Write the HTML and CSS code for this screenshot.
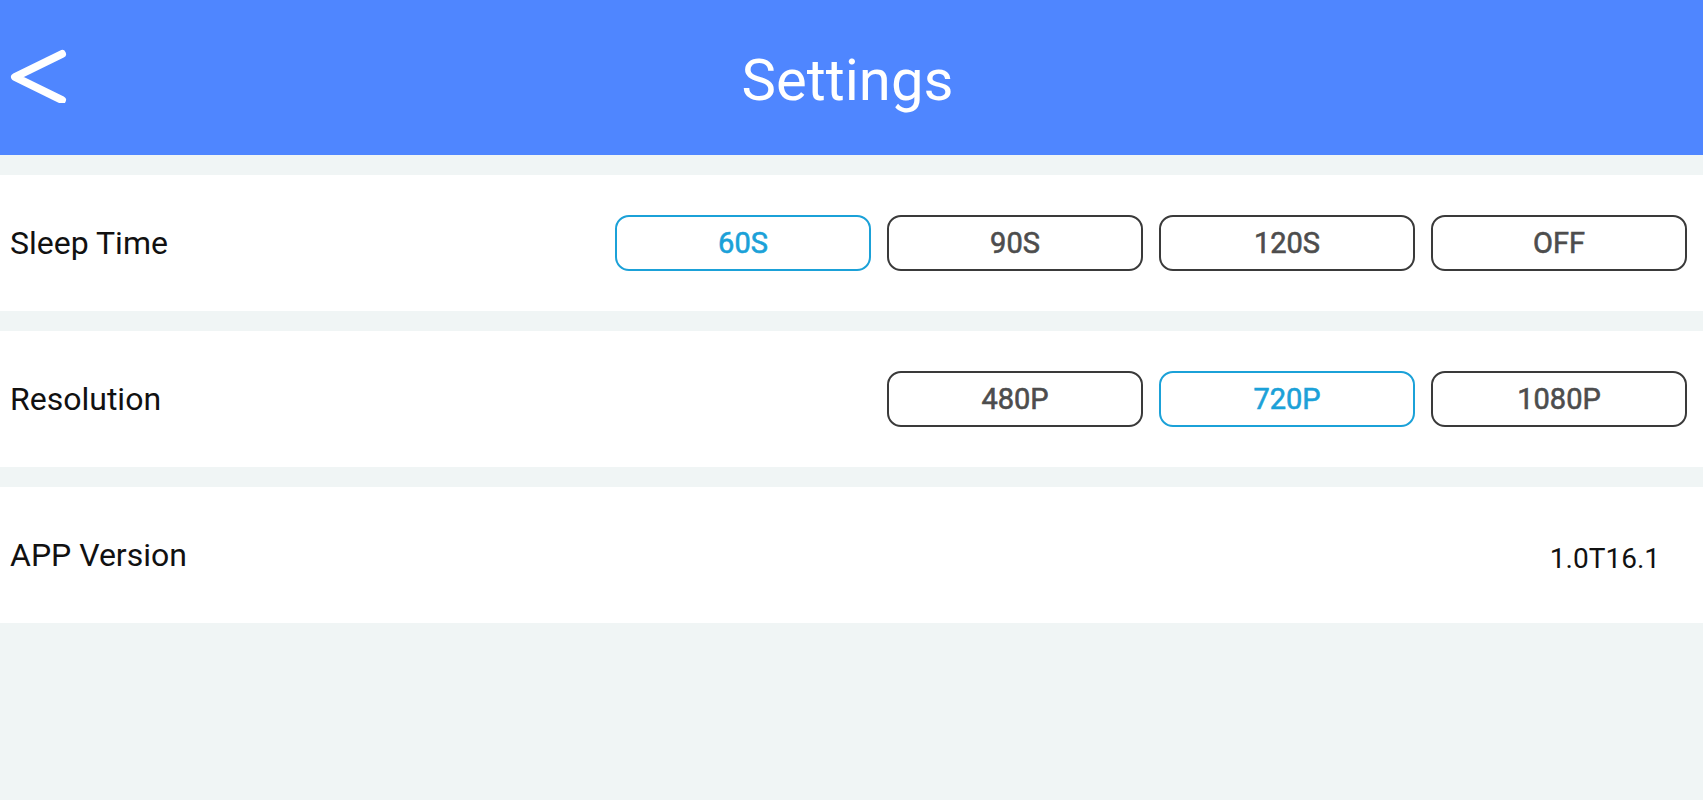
FILE: index.html
```html
<!DOCTYPE html>
<html lang="en">
<head>
    <meta charset="UTF-8">
    <meta name="viewport" content="width=device-width, initial-scale=1.0">
    <title>Settings</title>
    <link rel="stylesheet" href="styles.css">
</head>
<body>
    <header>
        <a href="#" class="back">
            <svg width="70" height="70" viewBox="0 0 70 70">
                <polyline points="62,21 15,44 62,67" fill="none" stroke="#fff" stroke-width="8" stroke-linecap="round" stroke-linejoin="round"/>
            </svg>
        </a>
        <h1>Settings</h1>
    </header>
    <main>
        <div class="row">
            <span class="label">Sleep Time</span>
            <div class="options">
                <button class="opt active">60S</button>
                <button class="opt">90S</button>
                <button class="opt">120S</button>
                <button class="opt">OFF</button>
            </div>
        </div>
        <div class="row">
            <span class="label">Resolution</span>
            <div class="options">
                <button class="opt">480P</button>
                <button class="opt active">720P</button>
                <button class="opt">1080P</button>
            </div>
        </div>
        <div class="row row-version">
            <span class="label">APP Version</span>
            <span class="value">1.0T16.1</span>
        </div>
    </main>
</body>
</html>
```

FILE: styles.css
```css
* {
    margin: 0;
    padding: 0;
    box-sizing: border-box;
}
body {
    font-family: Roboto, 'Liberation Sans', Arial, sans-serif;
    background: #f0f5f5;
    color: #111;
    height: 800px;
    overflow: hidden;
}
header {
    background: #4f86ff;
    height: 155px;
    display: flex;
    align-items: center;
    justify-content: center;
    position: relative;
}
.back {
    position: absolute;
    left: 0;
    top: 33px;
    display: block;
}
.back svg {
    display: block;
}
header h1 {
    color: #fff;
    font-size: 58px;
    font-weight: 400;
    margin: 4px 8px 0 0;
}
.row {
    background: #fff;
    height: 136px;
    margin-top: 20px;
    display: flex;
    align-items: center;
    justify-content: space-between;
    padding: 0 16px 0 10px;
}
.label {
    font-size: 32px;
    color: #111;
}
.options {
    display: flex;
    gap: 16px;
}
.opt {
    width: 256px;
    height: 56px;
    background: #fff;
    border: 2px solid #3a3a3a;
    border-radius: 14px;
    font-family: Roboto, 'Liberation Sans', Arial, sans-serif;
    font-size: 29px;
    font-weight: 400;
    -webkit-text-stroke: 0.6px currentColor;
    color: #4d4d4d;
}
.opt.active {
    border-color: #1ba1d8;
    color: #1ba1d8;
}
.row-version {
    padding-right: 43px;
}
.value {
    font-size: 28px;
    color: #111;
    margin-top: 6px;
}
```
